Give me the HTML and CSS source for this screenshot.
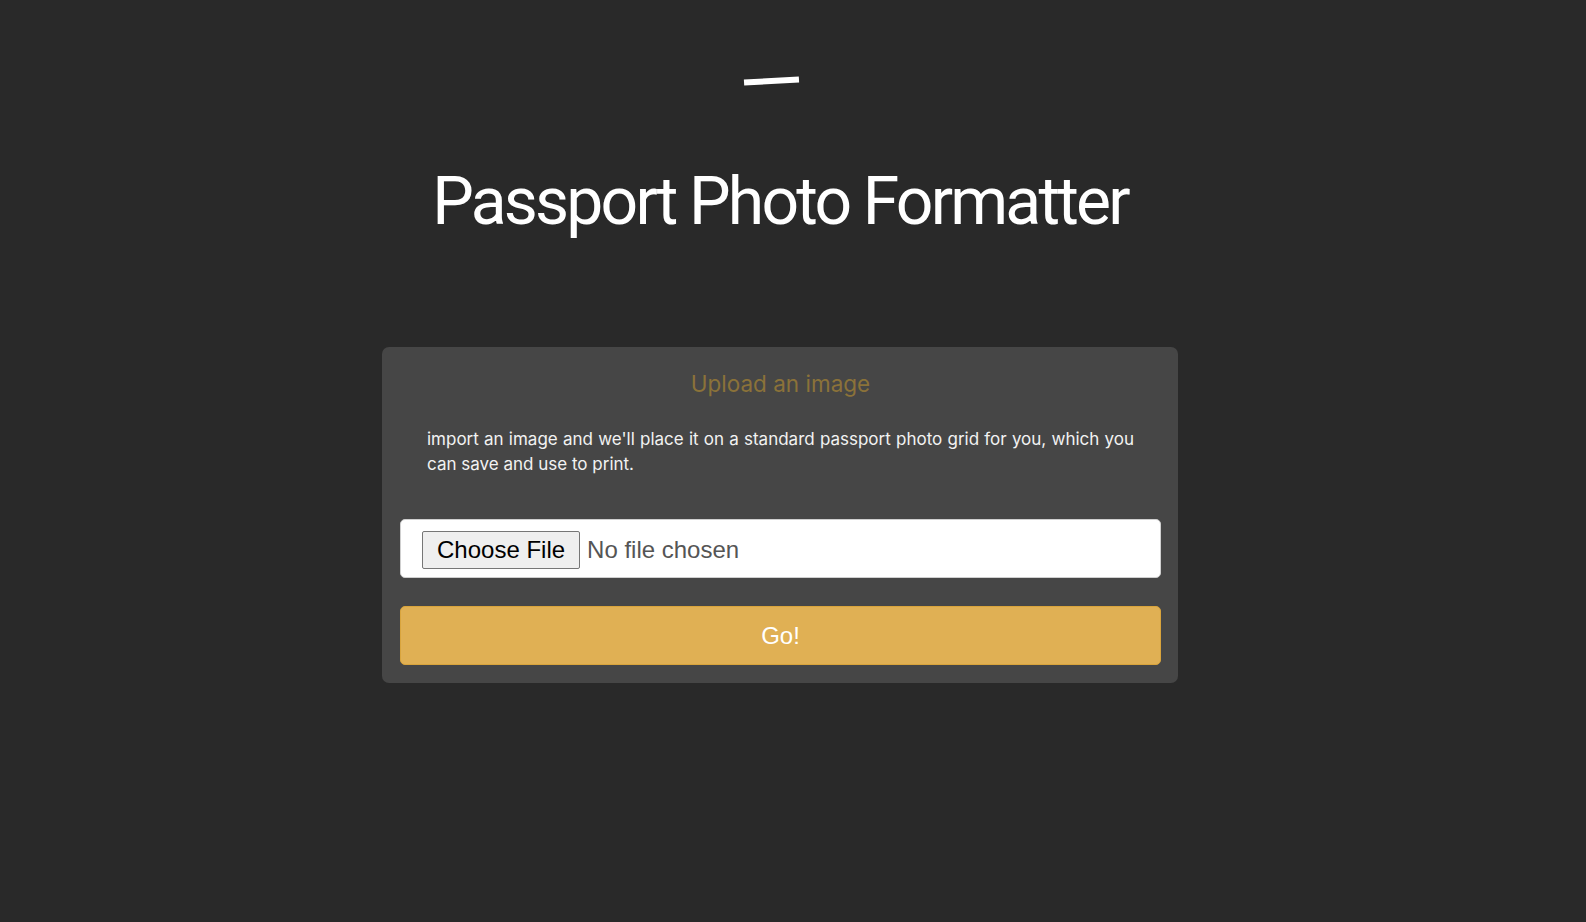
FILE: index.html
```html
<!DOCTYPE html>
<html lang="en">
<head>
<meta charset="utf-8">
<title>Passport Photo Formatter</title>
<link rel="stylesheet" href="styles.css">
</head>
<body>
<div class="page">
  <header class="header">
    <div class="logo"></div>
    <h1 class="title">Passport Photo Formatter</h1>
  </header>
  <main class="card">
    <h2 class="card-title">Upload an image</h2>
    <p class="card-text">import an image and we'll place it on a standard passport photo grid for you, which you can save and use to print.</p>
    <form class="upload-form">
      <input class="file-input" type="file" accept="image/*">
      <button class="go-button" type="button">Go!</button>
    </form>
  </main>
</div>
</body>
</html>
```
FILE: styles.css
```css
html, body {
  margin: 0;
  padding: 0;
  background: #292929;
  height: 100%;
}

body {
  font-family: Inter, "Noto Sans", sans-serif;
  color: #ffffff;
}

.page {
  width: 1560px;
  display: flex;
  flex-direction: column;
  align-items: center;
}

.header {
  display: flex;
  flex-direction: column;
  align-items: center;
  padding-top: 78px;
}

.logo {
  width: 55px;
  height: 6px;
  background: #ffffff;
  transform: translateX(-8px) rotate(-3deg);
}

.title {
  margin: 78px 0 0;
  font-family: Roboto, Inter, sans-serif;
  font-size: 66px;
  font-weight: 400;
  line-height: 80px;
  letter-spacing: -2.8px;
  color: #ffffff;
}

.card {
  margin-top: 105px;
  width: 796px;
  box-sizing: border-box;
  background: #464646;
  border-radius: 7px;
  padding: 18px 17px 18px 18px;
  display: flex;
  flex-direction: column;
}

.card-title {
  margin: 0;
  padding-top: 4px;
  text-align: center;
  font-size: 22.5px;
  font-weight: 400;
  line-height: 30px;
  color: #8b7239;
}

.card-text {
  margin: 28px 27px 0 27px;
  font-size: 17px;
  line-height: 25px;
  text-align: justify;
  color: #f2f2f2;
}

.upload-form {
  margin-top: 42px;
  display: flex;
  flex-direction: column;
  gap: 28px;
}

.file-input {
  box-sizing: border-box;
  width: 100%;
  height: 59px;
  margin: 0;
  padding: 3px 21px 0;
  background: #ffffff;
  border: 1px solid #cfcfcf;
  border-radius: 5px;
  font-family: "Liberation Sans", Arial, sans-serif;
  font-size: 24px;
  line-height: 54px;
  color: #555555;
}

.file-input::file-selector-button {
  height: 38px;
  margin: 0 7px 0 0;
  padding: 0 14px;
  font-family: "Liberation Sans", Arial, sans-serif;
  font-size: 24px;
  line-height: normal;
  color: #000000;
  background: #efefef;
  border: 1px solid #767676;
  border-radius: 2px;
}

.go-button {
  box-sizing: border-box;
  width: 100%;
  height: 59px;
  margin: 0;
  background: #e0b054;
  border: 1px solid #d9a43c;
  border-radius: 5px;
  font-family: "Liberation Sans", Arial, sans-serif;
  font-size: 24px;
  color: #ffffff;
}
```
